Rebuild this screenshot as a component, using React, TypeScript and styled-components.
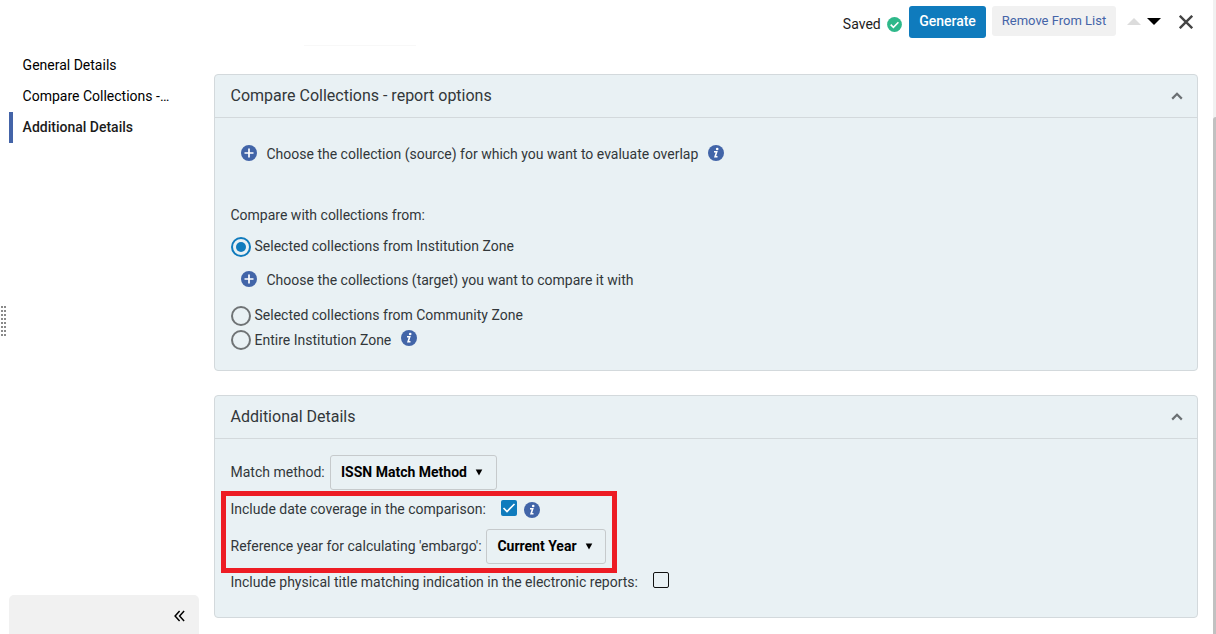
import React from 'react';
import styled, { createGlobalStyle } from 'styled-components';

const GlobalStyle = createGlobalStyle`
  * { box-sizing: border-box; }
  body {
    margin: 0;
    background: #fff;
    color: #32373a;
    font-family: Roboto, "Liberation Sans", sans-serif;
    font-size: 14px;
    overflow: hidden;
  }
  button { font-family: inherit; cursor: pointer; }
`;

const Page = styled.div`
  display: flex;
  height: 634px;
  width: 1216px;
`;

const Splitter = styled.div`
  width: 9px;
  flex: none;
  display: flex;
  flex-direction: column;
  justify-content: flex-start;
  padding: 306px 0 0 1px;
  gap: 2px;
`;

const GripRow = styled.span`
  display: flex;
  gap: 1px;
  height: 2px;

  &::before,
  &::after {
    content: '';
    width: 2px;
    height: 2px;
    background: #8a8a8a;
  }
`;

const Sidebar = styled.aside`
  width: 190px;
  flex: none;
  display: flex;
  flex-direction: column;
  justify-content: space-between;
  padding-top: 50px;
`;

const NavItem = styled.a<{ $active?: boolean }>`
  display: block;
  width: 190px;
  height: 31px;
  line-height: 31px;
  padding-left: ${(p) => (p.$active ? 9.6 : 13.6)}px;
  border-left: ${(p) => (p.$active ? '4px solid #4464a8' : '0')};
  font-weight: ${(p) => (p.$active ? 500 : 400)};
  color: ${(p) => (p.$active ? '#1c1c1c' : '#000')};
  white-space: nowrap;
`;

const CollapseBar = styled.button`
  display: flex;
  align-items: center;
  justify-content: flex-end;
  height: 39px;
  width: 190px;
  border: 0;
  border-radius: 5px 5px 0 0;
  background: #f1f1f1;
  padding: 2px 13px 0 0;
`;

const Main = styled.main`
  width: 984px;
  margin: 0 15px;
  flex: none;
  display: flex;
  flex-direction: column;
`;

const Toolbar = styled.header`
  height: 44px;
  flex: none;
  display: flex;
  align-items: flex-start;
  justify-content: flex-end;
  padding: 6px 5px 0 0;
`;

const Saved = styled.div`
  display: flex;
  align-items: center;
  height: 36px;
  gap: 6.3px;
  margin-right: 7px;
  color: #1c1c1c;

  svg { margin-top: 1px; }
`;

const Button = styled.button<{ $primary?: boolean }>`
  width: ${(p) => (p.$primary ? 77 : 124)}px;
  height: ${(p) => (p.$primary ? 32 : 30)}px;
  margin-right: ${(p) => (p.$primary ? 6 : 11)}px;
  padding: ${(p) => (p.$primary ? '0 0 2px' : '0')};
  border: 0;
  border-radius: 3px;
  background: ${(p) => (p.$primary ? '#0f7bbd' : '#f1f1f1')};
  color: ${(p) => (p.$primary ? '#fff' : '#4464a8')};
  font-size: ${(p) => (p.$primary ? 14 : 13)}px;
  font-weight: ${(p) => (p.$primary ? 500 : 400)};
  line-height: 30px;
`;

const Arrow = styled.span<{ $down?: boolean }>`
  margin: 12px 6px 0 0;
  border: 7px solid transparent;
  border-top: ${(p) => (p.$down ? '7px solid #000' : '0')};
  border-bottom: ${(p) => (p.$down ? '0' : '7px solid #dcdcdc')};
`;

const CloseIcon = styled.svg`
  margin: 9px 0 0 12px;
`;

const TabEdge = styled.div`
  width: 112px;
  height: 2px;
  margin: 0 0 28px 90px;
  border-bottom: 1px solid #f8f8f8;
  flex: none;
`;

const Panel = styled.section<{ $height: number }>`
  position: relative;
  flex: none;
  height: ${(p) => p.$height}px;
  margin-bottom: 24px;
  border: 1px solid #d3d9dc;
  border-radius: 4px;
  background: #e9f1f4;
`;

const PanelHeader = styled.div`
  display: flex;
  align-items: center;
  justify-content: space-between;
  height: 43px;
  padding: 0 14px 0 15.5px;
  border-bottom: 1px solid #d3d9dc;
`;

const PanelTitle = styled.h2`
  margin: 0;
  padding-bottom: 2px;
  font-size: 16px;
  font-weight: 400;
`;

const Row = styled.div<{ $top?: number; $height?: number; $indent?: number }>`
  display: flex;
  align-items: center;
  height: ${(p) => p.$height ?? 24}px;
  margin-top: ${(p) => p.$top ?? 0}px;
  padding-left: ${(p) => p.$indent ?? 15.5}px;
  white-space: nowrap;
`;

const Label = styled.span<{ $raise?: number }>`
  padding-bottom: ${(p) => p.$raise ?? 0}px;
`;

const Circle = styled.svg<{ $left?: number; $right?: number; $raise?: number }>`
  flex: none;
  margin: 0 ${(p) => p.$right ?? 0}px ${(p) => p.$raise ?? 0}px ${(p) => p.$left ?? 0}px;
`;

const Radio = styled.span<{ $checked?: boolean }>`
  width: 20px;
  height: 20px;
  flex: none;
  margin-right: 4px;
  border: 2px solid ${(p) => (p.$checked ? '#0f7bbd' : '#6f7375')};
  border-radius: 50%;
  padding: 3px;

  &::after {
    content: '';
    display: block;
    width: 10px;
    height: 10px;
    border-radius: 50%;
    background: ${(p) => (p.$checked ? '#0f7bbd' : 'transparent')};
  }
`;

const Select = styled.button<{ $width: number; $left: number }>`
  display: flex;
  align-items: center;
  justify-content: space-between;
  width: ${(p) => p.$width}px;
  height: 35px;
  margin-left: ${(p) => p.$left}px;
  padding: 0 12.6px 0 10.3px;
  border: 1px solid #c6cacc;
  border-radius: 3px;
  background: transparent;
  color: #000;
  font-size: 14px;
  font-weight: 700;
`;

const Checkbox = styled.span<{ $checked?: boolean; $left: number; $raise?: number }>`
  display: flex;
  width: 16px;
  height: 16px;
  margin: 0 7px ${(p) => p.$raise ?? 2}px ${(p) => p.$left}px;
  border: ${(p) => (p.$checked ? '0' : '1px solid #111')};
  border-radius: 2px;
  background: ${(p) => (p.$checked ? '#0f7bbd' : 'transparent')};
`;

const Highlight = styled.div`
  position: absolute;
  left: 6px;
  top: 95px;
  width: 396px;
  height: 82px;
  border: 5px solid #ed1c24;
  pointer-events: none;
`;

const ScrollTrack = styled.div`
  flex: none;
  width: 3px;
  padding-top: 117px;
  background: #f1f1f1;
`;

const ScrollThumb = styled.div`
  height: 517px;
  border-radius: 3px 0 0 0;
  background: #c1c1c1;
`;

const Plus = () => (
  <Circle width="16" height="16" viewBox="0 0 16 16" $right={10} $raise={2}>
    <circle cx="8" cy="8" r="8" fill="#4265a8" />
    <path d="M8 3.5v9M3.5 8h9" stroke="#fff" strokeWidth="1.7" />
  </Circle>
);

const Info = ({ left = 0, raise = 0 }: { left?: number; raise?: number }) => (
  <Circle width="16" height="16" viewBox="0 0 16 16" $left={left} $raise={raise}>
    <circle cx="8" cy="8" r="8" fill="#4265a8" />
    <circle cx="9.2" cy="4" r="1.3" fill="#fff" />
    <path d="M6 6.8H8.7L7.1 11.7H9.5" fill="none" stroke="#fff" strokeWidth="1.6" />
  </Circle>
);

const Chevron = () => (
  <svg width="12" height="8" viewBox="0 0 12 8">
    <path d="M1.2 6.6L6 1.8l4.8 4.8" fill="none" stroke="#6b7073" strokeWidth="2.2" />
  </svg>
);

const Caret = () => (
  <svg width="8" height="7" viewBox="0 0 8 7">
    <path d="M0.7 0.5h6.6L4 6.5z" fill="#000" />
  </svg>
);

export default function App() {
  return (
    <Page>
      <GlobalStyle />
      <Splitter>
        {Array.from({ length: 8 }, (_, i) => (
          <GripRow key={i} />
        ))}
      </Splitter>
      <Sidebar>
        <nav>
          <NavItem>General Details</NavItem>
          <NavItem>Compare Collections -…</NavItem>
          <NavItem $active>Additional Details</NavItem>
        </nav>
        <CollapseBar aria-label="Collapse">
          <svg width="12" height="12" viewBox="0 0 12 12">
            <path d="M5.6 1L1.1 6L5.6 11M10.1 1L5.6 6l4.5 5" fill="none" stroke="#000" strokeWidth="1.5" />
          </svg>
        </CollapseBar>
      </Sidebar>
      <Main>
        <Toolbar>
          <Saved>
            Saved
            <svg width="15" height="15" viewBox="0 0 15 15">
              <circle cx="7.5" cy="7.5" r="7.4" fill="#2eb88a" />
              <path d="M3.7 7.6l2.7 2.7 5-5.1" fill="none" stroke="#fff" strokeWidth="1.6" />
            </svg>
          </Saved>
          <Button $primary>Generate</Button>
          <Button>Remove From List</Button>
          <Arrow />
          <Arrow $down />
          <CloseIcon width="14" height="14" viewBox="0 0 14 14">
            <path d="M0.8 0.8l12.4 12.4M13.2 0.8L0.8 13.2" stroke="#444" strokeWidth="2.4" />
          </CloseIcon>
        </Toolbar>
        <TabEdge />
        <Panel $height={297}>
          <PanelHeader>
            <PanelTitle>Compare Collections - report options</PanelTitle>
            <Chevron />
          </PanelHeader>
          <Row $top={24} $indent={25.5}>
            <Plus />
            <Label>Choose the collection (source) for which you want to evaluate overlap</Label>
            <Info left={10} raise={2} />
          </Row>
          <Row $top={37}>Compare with collections from:</Row>
          <Row $top={8}>
            <Radio $checked />
            <Label $raise={2}>Selected collections from Institution Zone</Label>
          </Row>
          <Row $top={9} $indent={25.5}>
            <Plus />
            <Label>Choose the collections (target) you want to compare it with</Label>
          </Row>
          <Row $top={12}>
            <Radio />
            <Label $raise={2}>Selected collections from Community Zone</Label>
          </Row>
          <Row>
            <Radio />
            <Label>Entire Institution Zone</Label>
            <Info left={10} raise={4} />
          </Row>
        </Panel>
        <Panel $height={223}>
          <PanelHeader>
            <PanelTitle>Additional Details</PanelTitle>
            <Chevron />
          </PanelHeader>
          <Row $top={16} $height={35}>
            <Label $raise={2}>Match method:</Label>
            <Select $width={167} $left={5}>
              <Label $raise={2}>ISSN Match Method</Label>
              <Caret />
            </Select>
          </Row>
          <Row $top={7}>
            Include date coverage in the comparison:
            <Checkbox $checked $left={15}>
              <svg width="16" height="16" viewBox="0 0 16 16">
                <path d="M2.5 8l3.5 3.5L13.5 4" fill="none" stroke="#fff" strokeWidth="1.6" />
              </svg>
            </Checkbox>
            <Info raise={-2} />
          </Row>
          <Row $top={8} $height={35}>
            <Label $raise={2}>Reference year for calculating 'embargo':</Label>
            <Select $width={120} $left={4.5}>
              <Label $raise={2}>Current Year</Label>
              <Caret />
            </Select>
          </Row>
          <Row $top={6}>
            Include physical title matching indication in the electronic reports:
            <Checkbox $left={15} $raise={4} />
          </Row>
          <Highlight />
        </Panel>
      </Main>
      <ScrollTrack>
        <ScrollThumb />
      </ScrollTrack>
    </Page>
  );
}
